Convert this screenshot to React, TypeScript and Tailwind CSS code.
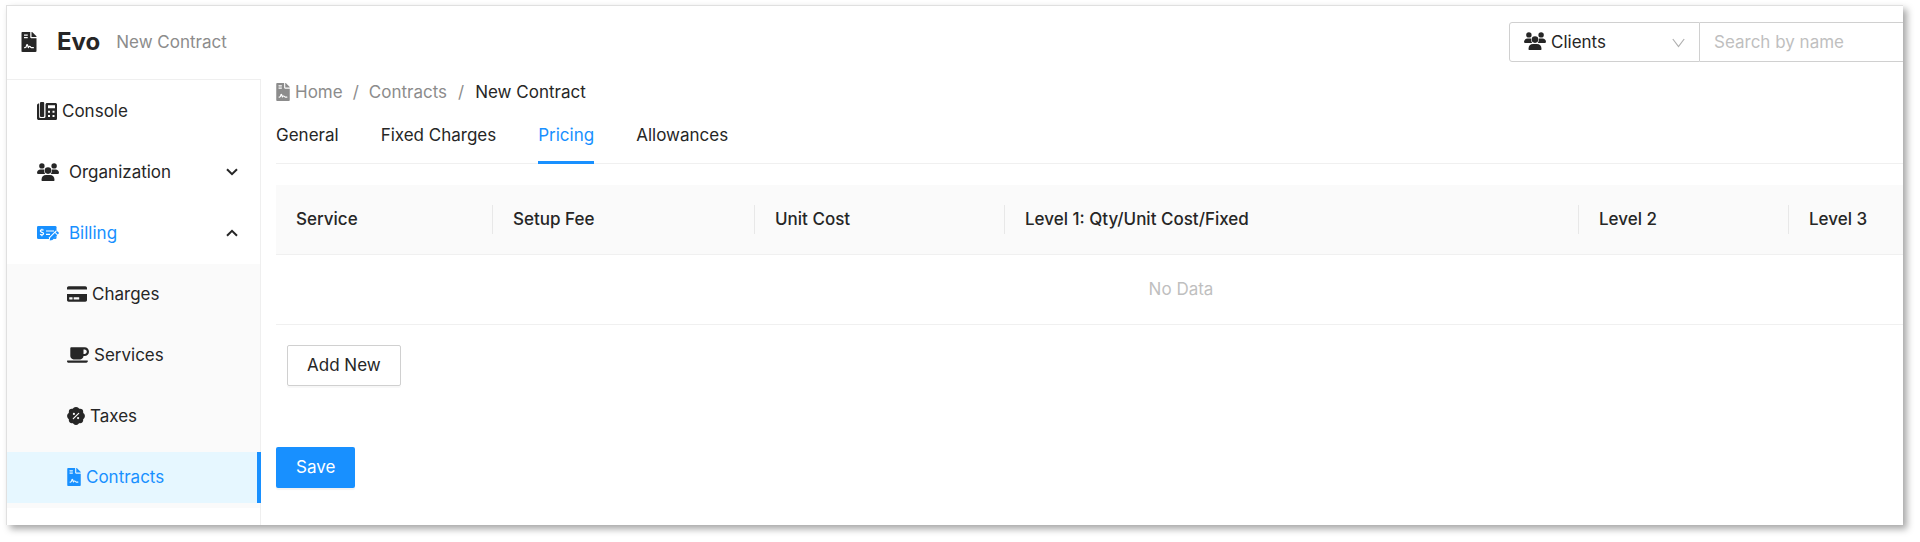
import React from "react";
import { FaCoffee, FaCreditCard, FaFileContract } from "react-icons/fa";

type SvgProps = { className?: string };

function OfficePhoneIcon({ className }: SvgProps) {
  return (
    <svg viewBox="0 0 20 18" className={className} fill="currentColor" aria-hidden="true">
      <path d="M2.200 1.600v13.100c0 .8.5 1.300 1.200 1.300h3.400c.7 0 1.700-.5 1.700-1.300V2.600c0-.9.700-1.600 1.600-1.600h8.300c.9 0 1.600.7 1.600 1.600V16.400c0 .9-.7 1.600-1.600 1.600H1.800C.8 18 0 17.200 0 16.200V3.200c0-.9.9-1.600 2.200-1.600zM11 3.300v2.900h7V3.300zM11 8.700v2h2v-2zM15.500 8.700v2h2v-2zM11 13v2h2v-2zM15.500 13v2h2v-2z" fillRule="evenodd" />
      <rect x="3" y="0" width="4.200" height="15" rx="1" />
    </svg>
  );
}

function UsersIcon({ className }: SvgProps) {
  return (
    <svg viewBox="0 0 22 18" className={className} fill="currentColor" aria-hidden="true">
      <circle cx="4.900" cy="2.900" r="2.700" />
      <circle cx="17.100" cy="2.900" r="2.700" />
      <circle cx="11" cy="7.600" r="3.300" />
      <path d="M0 10.100C0 8 1.500 6.600 3.500 6.600h2.600c.4 0 .8.100 1.100.2-.2 1.600.1 2.900 1 4.100H.9c-.5 0-.9-.3-.9-.8z" />
      <path d="M22 10.100c0-2.100-1.500-3.500-3.500-3.500h-2.600c-.4 0-.8.100-1.100.2.2 1.600-.1 2.900-1 4.100h7.300c.5 0 .9-.3.9-.8z" />
      <path d="M4.500 17c0-3 1.800-4.900 4.600-4.900h3.800c2.800 0 4.600 1.900 4.600 4.900 0 .6-.4 1-1 1h-11c-.6 0-1-.4-1-1z" />
    </svg>
  );
}

function CheckEditIcon({ className }: SvgProps) {
  return (
    <svg viewBox="0 0 22 16" className={className} fill="none" aria-hidden="true">
      <rect x="0" y="1" width="19.500" height="13" rx="1.300" fill="currentColor" />
      <path d="M6.600 5.300C5.800 4.600 3.300 4.600 3.300 6.100c0 1.500 3.300.9 3.300 2.500 0 1.600-2.600 1.500-3.500.7M4.900 3.700v1.200M4.900 10v1.200" stroke="#fff" strokeWidth="1.200" />
      <path d="M9 6h8M9 9.400h4" stroke="#fff" strokeWidth="1.200" />
      <path d="M11.600 16l.6-3.800L18.800 5.400l3.200 3-6.800 6.900z" fill="#fff" />
      <path d="M12.700 15.500l.5-2.800 4.700-4.700 2.300 2.300-4.700 4.700zM18.600 7.300l.9-.9c.3-.3.8-.3 1.100 0l1.100 1.100c.3.3.3.8 0 1.100l-.9.9z" fill="currentColor" />
    </svg>
  );
}

function BadgePercentIcon({ className }: SvgProps) {
  return (
    <svg viewBox="0 0 18 18" className={className} aria-hidden="true">
      <g fill="currentColor">
        <circle cx="9" cy="9" r="7.900" />
        <circle cx="9" cy="3.200" r="3.100" />
        <circle cx="13.100" cy="4.900" r="3.100" />
        <circle cx="14.800" cy="9" r="3.100" />
        <circle cx="13.100" cy="13.100" r="3.100" />
        <circle cx="9" cy="14.800" r="3.100" />
        <circle cx="4.900" cy="13.100" r="3.100" />
        <circle cx="3.200" cy="9" r="3.100" />
        <circle cx="4.900" cy="4.900" r="3.100" />
      </g>
      <path d="M6.300 11.700l5.400-5.400" stroke="#fafafa" strokeWidth="1.200" strokeLinecap="round" />
      <circle cx="6.900" cy="6.900" r="1.100" fill="#fafafa" />
      <circle cx="11.100" cy="11.100" r="1.100" fill="#fafafa" />
    </svg>
  );
}

function Chevron({ className }: SvgProps) {
  return (
    <svg viewBox="0 0 12 8" className={className} fill="none" stroke="currentColor" aria-hidden="true">
      <path d="M1 1.200l5 5 5-5" />
    </svg>
  );
}

function ThinChevron({ className }: SvgProps) {
  return (
    <svg viewBox="0 0 13 10" className={className} fill="none" stroke="currentColor" aria-hidden="true">
      <path d="M.8 1l5.700 7.500L12.200 1" strokeWidth="1.200" />
    </svg>
  );
}

const subItems = [
  { label: "Charges", icon: <FaCreditCard className="h-[18px] w-5" /> },
  { label: "Services", icon: <FaCoffee className="h-[18px] w-[22px]" /> },
  { label: "Taxes", icon: <BadgePercentIcon className="size-[18px]" /> },
  { label: "Contracts", icon: <FaFileContract className="h-[18px] w-[14px]" />, active: true },
];

const columns = [
  { label: "Service", width: "w-[217px]" },
  { label: "Setup Fee", width: "w-[262px]" },
  { label: "Unit Cost", width: "w-[250px]" },
  { label: "Level 1: Qty/Unit Cost/Fixed", width: "w-[574px]" },
  { label: "Level 2", width: "w-[210px]" },
  { label: "Level 3", width: "w-[297px]" },
];

const tabs = ["General", "Fixed Charges", "Pricing", "Allowances"];

function Header() {
  return (
    <header className="flex h-[73px] items-center pb-[2px]">
      <FaFileContract className="ml-[14px] h-5 w-4" />
      <h1 className="ml-5 text-[24px] leading-8 font-bold">Evo</h1>
      <span className="ml-4 text-[#8c8c8c]">New Contract</span>
      <form className="ml-auto flex h-10" onSubmit={(e) => e.preventDefault()}>
        <div className="relative">
          <UsersIcon className="pointer-events-none absolute top-[10px] left-[15px] h-[18px] w-[22px]" />
          <select
            aria-label="Search in"
            className="h-full w-[191px] appearance-none rounded-l-[3px] border border-[#d0d0d0] bg-white pl-[41px] outline-none"
          >
            <option>Clients</option>
          </select>
          <ThinChevron className="pointer-events-none absolute top-4 right-[15px] h-[10px] w-[13px] text-[#b0b0b0]" />
        </div>
        <input
          aria-label="Search by name"
          placeholder="Search by name"
          className="w-[203px] border-y border-[#d0d0d0] px-[14px] outline-none placeholder:text-[#bfbfbf]"
        />
      </form>
    </header>
  );
}

function Sidebar() {
  return (
    <nav className="w-[254px] shrink-0 border-t border-r border-[#efefef]">
      <ul className="pt-px">
        <li>
          <a href="#console" className="flex h-[61px] items-center gap-[5px] pb-[2px] pl-[30px]">
            <OfficePhoneIcon className="h-[18px] w-5" />
            Console
          </a>
        </li>
        <li>
          <button type="button" aria-expanded="false" className="flex h-[61px] w-full items-center gap-[10px] pr-[22px] pb-[2px] pl-[30px]">
            <UsersIcon className="h-[18px] w-[22px]" />
            Organization
            <Chevron className="ml-auto h-2 w-3 stroke-2" />
          </button>
        </li>
        <li>
          <button type="button" aria-expanded="true" className="flex h-[61px] w-full items-center gap-[10px] pr-[22px] pb-[2px] pl-[30px] text-[#1890ff]">
            <CheckEditIcon className="h-4 w-[22px]" />
            Billing
            <Chevron className="ml-auto h-2 w-3 rotate-180 stroke-2 text-[#262626]" />
          </button>
          <ul className="bg-[#fafafa]">
            {subItems.map((item) => (
              <li key={item.label} className="flex h-[61px] items-center">
                <a
                  href={"#" + item.label.toLowerCase()}
                  aria-current={item.active ? "page" : undefined}
                  className={
                    "flex h-[51px] flex-1 items-center gap-[5px] pb-[2px] pl-[60px]" +
                    (item.active ? " -mr-px border-r-4 border-[#1890ff] bg-[#e6f7ff] text-[#1890ff]" : "")
                  }
                >
                  {item.icon}
                  {item.label}
                </a>
              </li>
            ))}
          </ul>
        </li>
      </ul>
    </nav>
  );
}

function PricingTable() {
  return (
    <table className="mt-[21px] w-[1810px] table-fixed border-collapse text-left">
      <thead className="bg-[#fafafa]">
        <tr className="h-[69px] border-b border-[#f0f0f0]">
          {columns.map((c, i) => (
            <th key={c.label} scope="col" className={c.width + " p-0 font-medium"}>
              <div className={"flex h-[29px] items-center pl-5 " + (i < columns.length - 1 ? "border-r border-[#e8e8e8]" : "")}>
                {c.label}
              </div>
            </th>
          ))}
        </tr>
      </thead>
      <tbody>
        <tr className="h-[70px] border-b border-[#f0f0f0]">
          <td colSpan={columns.length} className="text-center text-[#bfbfbf]">
            No Data
          </td>
        </tr>
      </tbody>
    </table>
  );
}

export default function App() {
  return (
    <div className="bg-white pt-[5px] pr-[17px] pb-[17px] pl-[6px]">
      <div className="flex flex-col overflow-hidden border-t border-l border-[#e0e0e0] bg-white font-[Inter,'Noto_Sans',sans-serif] text-[17px] leading-[26px] text-[#262626] shadow-[4px_4px_7px_rgba(0,0,0,0.35)]">
        <Header />
        <div className="flex">
          <Sidebar />
          <main className="min-w-0 flex-1 overflow-hidden pb-[37px] pl-[15px]">
            <nav aria-label="Breadcrumb">
              <ol className="flex items-center text-[#8c8c8c]">
                <li>
                  <a href="#home" className="flex items-center gap-[5px]">
                    <FaFileContract className="h-[18px] w-[14px]" />
                    Home
                  </a>
                </li>
                <li aria-hidden="true" className="px-[10px]">/</li>
                <li><a href="#contracts">Contracts</a></li>
                <li aria-hidden="true" className="px-[11px]">/</li>
                <li aria-current="page" className="text-[#262626]">New Contract</li>
              </ol>
            </nav>
            <div role="tablist" className="mt-[17px] flex h-[42px] gap-[42px] border-b border-[#f0f0f0]">
              {tabs.map((t) => (
                <button
                  key={t}
                  type="button"
                  role="tab"
                  aria-selected={t === "Pricing"}
                  className={
                    "-mb-px flex items-start " +
                    (t === "Pricing" ? "border-b-[3px] border-[#1890ff] text-[#1890ff]" : "")
                  }
                >
                  {t}
                </button>
              ))}
            </div>
            <PricingTable />
            <button type="button" className="mt-5 ml-[11px] flex h-[41px] items-center rounded-[2px] border border-[#d0d0d0] px-[19px] shadow-[0_2px_1px_rgba(0,0,0,0.03)]">
              Add New
            </button>
            <button type="button" className="mt-[61px] flex h-[41px] items-center rounded-[2px] bg-[#1890ff] px-5 text-white shadow-[0_2px_1px_rgba(0,0,0,0.05)]">
              Save
            </button>
          </main>
        </div>
      </div>
    </div>
  );
}
